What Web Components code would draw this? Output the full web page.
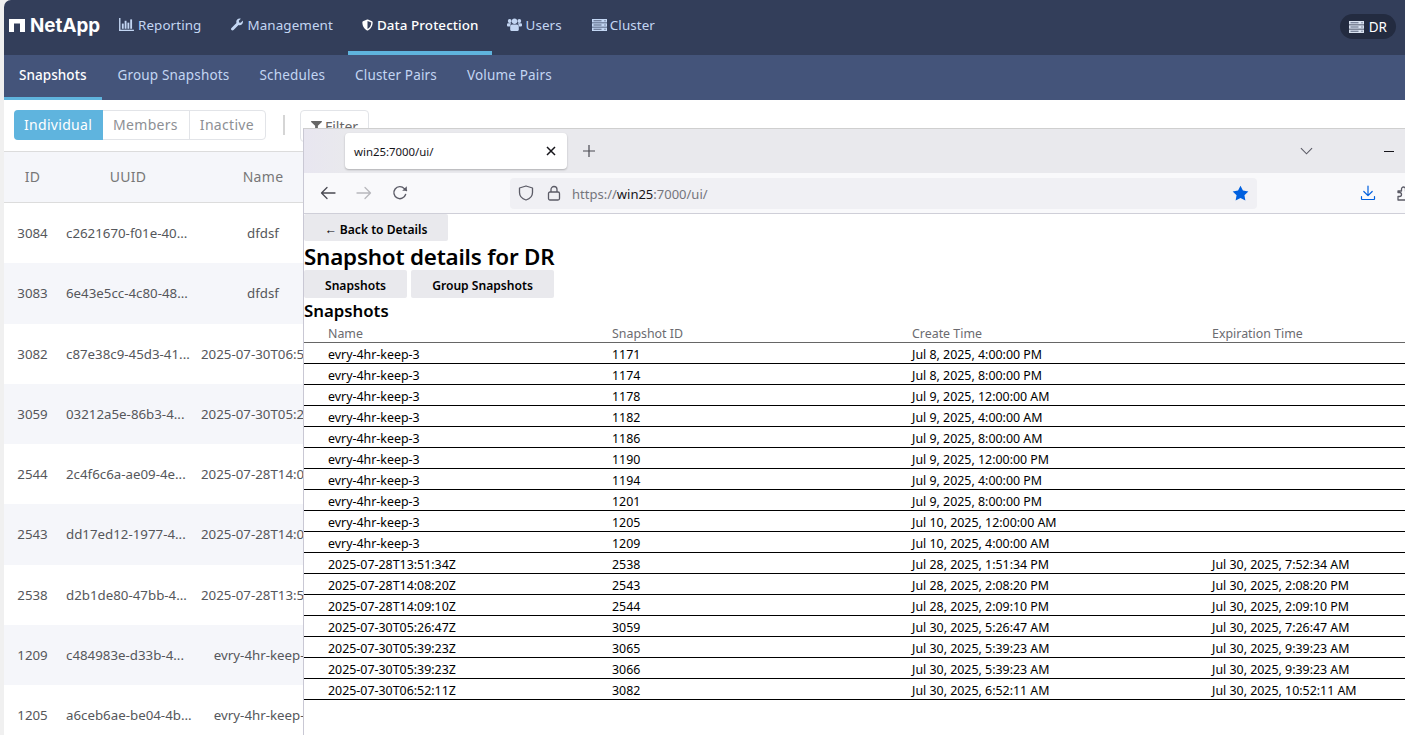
<!DOCTYPE html>
<html>
<head>
<meta charset="utf-8">
<title>Snapshots</title>
<style>
  html, body { margin: 0; height: 100%; overflow: hidden; }
  body { background: #f0f0f0; font-family: "Noto Sans", sans-serif; }
</style>
</head>
<body>
<app-shell></app-shell>

<script>
const ICONS = {
	chart: '<svg viewBox="0 0 16 14" width="15" height="13" fill="currentColor"><rect x="0" y="0" width="1.5" height="14"/><rect x="0" y="12.6" width="16" height="1.4"/><rect x="3" y="6" width="2" height="5.6"/><rect x="6" y="3" width="2" height="8.6"/><rect x="9" y="5" width="2" height="6.6"/><rect x="12" y="1.5" width="2" height="10.1"/></svg>',
	wrench: '<svg viewBox="0 0 512 512" width="13" height="13" fill="currentColor"><path d="M507.73 109.1c-2.24-9.03-13.54-12.09-20.12-5.51l-74.36 74.36-67.88-11.31-11.31-67.88 74.36-74.36c6.62-6.62 3.43-17.9-5.66-20.16-47.38-11.74-99.55.91-136.58 37.93-39.64 39.64-50.55 97.1-34.05 147.2L18.74 402.76c-24.99 24.99-24.99 65.51 0 90.5 24.99 24.99 65.51 24.99 90.5 0l213.21-213.21c50.12 16.71 107.47 5.68 147.37-34.22 37.07-37.07 49.7-89.32 37.91-136.73z"/></svg>',
	shield: '<svg viewBox="0 0 512 512" width="11" height="12" fill="currentColor"><path d="M466.5 83.7l-192-80a48.15 48.15 0 0 0-36.9 0l-192 80C27.7 91.1 16 108.6 16 128c0 198.5 114.5 335.7 221.5 380.3 11.8 4.9 25.1 4.9 36.9 0C360.1 472.6 496 349.3 496 128c0-19.4-11.7-36.9-29.5-44.3zM256.1 446.3l-.1-381 175.9 73.3c-3.3 151.4-82.1 261.1-175.8 307.7z"/></svg>',
	users: '<svg viewBox="0 0 15 13" width="15" height="13" fill="currentColor"><circle cx="2.7" cy="3" r="1.9"/><circle cx="12.3" cy="3" r="1.9"/><circle cx="7.5" cy="3.3" r="2.7"/><path d="M0 6.4c0-.7.6-1.1 1.2-1.1h2.2c.4 0 .7.1 1 .3-.8.7-1.4 1.6-1.5 2.8H.9C.4 8.4 0 8 0 7.5zM15 6.4c0-.7-.6-1.1-1.2-1.1h-2.2c-.4 0-.7.1-1 .3.8.7 1.4 1.6 1.5 2.8h2c.5 0 .9-.4.9-.9zM5 6.600h5c1 0 1.800.8 1.800 1.800v3.400c0 .7-.5 1.200-1.200 1.200H4.400c-.7 0-1.200-.5-1.200-1.200V8.400C3.200 7.400 4 6.600 5 6.600z"/></svg>',
	server: '<svg viewBox="0 0 15 12" width="15" height="12"><path fill="currentColor" d="M0 0h15v3.500H0zM0 4.250h15v3.500H0zM0 8.500h15V12H0z"/><path fill="#333e5a" opacity=".75" d="M1.500 1.300h8v1h-8zM1.500 5.500h8v1h-8zM1.500 9.800h8v1h-8z"/><path fill="#333e5a" d="M12.500 1.300h1v1h-1zM12.500 5.500h1v1h-1zM12.500 9.800h1v1h-1z"/></svg>',
	filter: '<svg viewBox="0 0 512 512" width="11" height="11" fill="currentColor"><path d="M487.976 0H24.028C2.71 0-8.047 25.866 7.058 40.971L192 225.941V432c0 7.831 3.821 15.17 10.237 19.662l80 55.98C298.02 518.69 320 507.493 320 487.98V225.941l184.947-184.97C520.021 25.896 509.338 0 487.976 0z"/></svg>',
	back: '<svg viewBox="0 0 16 16" width="16" height="16" fill="none" stroke="currentColor" stroke-width="1.300" stroke-linecap="round" stroke-linejoin="round"><path d="M15 8H1.500M7 2.500 1.500 8 7 13.500"/></svg>',
	forward: '<svg viewBox="0 0 16 16" width="16" height="16" fill="none" stroke="currentColor" stroke-width="1.300" stroke-linecap="round" stroke-linejoin="round"><path d="M1 8h13.500M9 2.500 14.500 8 9 13.500"/></svg>',
	reload: '<svg viewBox="0 0 16 16" width="16" height="16" fill="none" stroke="currentColor" stroke-width="1.400" stroke-linecap="round" stroke-linejoin="round"><path d="M13.600 9.500A6 6 0 1 1 12.300 3.600L14.500 5.500"/><path d="M14.800 1.200v4.600h-4.600" stroke="none" fill="currentColor"/></svg>',
	urlshield: '<svg viewBox="0 0 16 16" width="16" height="16" fill="none" stroke="currentColor" stroke-width="1.300" stroke-linejoin="round"><path d="M8 1 14.500 3v4.500c0 3.800-2.800 6.300-6.500 7.500-3.700-1.200-6.500-3.700-6.500-7.500V3z"/></svg>',
	lock: '<svg viewBox="0 0 16 16" width="16" height="16" fill="none" stroke="currentColor" stroke-width="1.300" stroke-linejoin="round"><rect x="2.500" y="7" width="11" height="8" rx="1.500"/><path d="M5 7V4.500a3 3 0 0 1 6 0V7"/></svg>',
	star: '<svg viewBox="0 0 16 16" width="17" height="17" fill="#0060df"><path d="M8 .6 10.300 5.200l5.100.8-3.700 3.600.9 5.100L8 12.300l-4.600 2.400.9-5.100L.6 6l5.100-.8z"/></svg>',
	download: '<svg viewBox="0 0 16 16" width="16" height="16" fill="none" stroke="#0060df" stroke-width="1.200" stroke-linecap="round" stroke-linejoin="round"><path d="M8 1v9.500M3.800 6.500 8 10.700l4.200-4.200M1.500 11.500V14c0 .3.200.5.500.5h12c.3 0 .5-.2.500-.5v-2.500"/></svg>',
	puzzle: '<svg viewBox="0 0 16 16" width="16" height="16" fill="none" stroke="#5b5b66" stroke-width="1.300" stroke-linejoin="round"><path d="M1 6h3.500V4a2 2 0 0 1 4 0v2H12v3.500h2a2 2 0 0 1 0 4h-2V15H1v-3.500h1.500a2 2 0 0 0 0-4H1z"/></svg>',
	close: '<svg viewBox="0 0 10 10" width="10" height="10" fill="none" stroke="currentColor" stroke-width="1.500"><path d="M1 1l8 8M9 1l-8 8"/></svg>',
	plus: '<svg viewBox="0 0 14 14" width="14" height="14" fill="none" stroke="currentColor" stroke-width="1.200"><path d="M7 1v12M1 7h12"/></svg>',
	chevron: '<svg viewBox="0 0 14 8" width="13" height="8" fill="none" stroke="currentColor" stroke-width="1.200"><path d="M1 1l6 6 6-6"/></svg>'
};

class NavItem extends HTMLElement {
	constructor() {
		super();
		this.attachShadow({ mode: 'open' });
	}

	connectedCallback() {
		const icon = ICONS[this.getAttribute('icon')] || '';
		this.shadowRoot.innerHTML = `
      <style>
        :host {
          display: flex;
          align-items: center;
          gap: 4px;
          height: 49px;
          padding: 0 14px 2px;
          margin-right: 1px;
          color: #c3d6f3;
          font-size: 13.4px;
          letter-spacing: 0.1px;
          border-bottom: 4px solid transparent;
        }
        :host([active]) {
          color: #fff;
          font-weight: 500;
          padding-right: 13px;
          border-bottom-color: #5fb4de;
        }
        :host([icon="server"]) { margin-left: 1px; gap: 3px; }
        .icon { display: flex; }
        :host([icon="wrench"]) .icon { width: 12px; margin-left: 1px; }
      </style>
      <span class="icon">${icon}</span><slot></slot>
    `;
	}
}

class TopNav extends HTMLElement {
	constructor() {
		super();
		this.attachShadow({ mode: 'open' });
		this.shadowRoot.innerHTML = `
      <style>
        :host {
          display: flex;
          height: 55px;
          background: #333e5a;
          border-top-left-radius: 7px;
          align-items: flex-start;
        }
        .logo {
          display: flex;
          align-items: center;
          gap: 5px;
          width: 101px;
          height: 51px;
          padding-left: 5px;
          box-sizing: border-box;
          color: #fff;
          font: 700 18.8px "Inter", sans-serif;
        }
        .pill {
          margin: 14px 9px 0 auto;
          display: flex;
          align-items: center;
          gap: 5px;
          height: 25px;
          padding: 0 9px;
          border-radius: 13px;
          background: #232b40;
          color: #fff;
          font-size: 13.5px;
        }
        .pill svg { display: block; }
        .pill span { display: flex; color: #d9e2f0; }
      </style>
      <div class="logo">
        <svg viewBox="0 0 16 13" width="16" height="13" fill="#fff"><path d="M0 0h16v13h-5V4.500H5V13H0z"/></svg>
        NetApp
      </div>
      <nav-item icon="chart">Reporting</nav-item>
      <nav-item icon="wrench">Management</nav-item>
      <nav-item icon="shield" active>Data Protection</nav-item>
      <nav-item icon="users">Users</nav-item>
      <nav-item icon="server">Cluster</nav-item>
      <div class="pill"><span>${ICONS.server}</span>DR</div>
    `;
	}
}

class SubNav extends HTMLElement {
	constructor() {
		super();
		this.attachShadow({ mode: 'open' });
		const tabs = ['Snapshots', 'Group Snapshots', 'Schedules', 'Cluster Pairs', 'Volume Pairs'];
		this.shadowRoot.innerHTML = `
      <style>
        :host {
          display: flex;
          height: 45px;
          background: #44547a;
        }
        .tab {
          display: flex;
          align-items: center;
          height: 40px;
          padding: 0 15px 2px;
          color: #c3d6f3;
          font-size: 13.5px;
          letter-spacing: 0.17px;
          border-bottom: 3px solid transparent;
        }
        .tab.active { color: #fff; font-weight: 500; letter-spacing: 0.06px; margin-right: 1px; border-bottom-color: #5fb4de; }
      </style>
      ${tabs.map((t, i) => `<div class="tab${i === 0 ? ' active' : ''}">${t}</div>`).join('')}
    `;
	}
}

class SegControl extends HTMLElement {
	constructor() {
		super();
		this.attachShadow({ mode: 'open' });
		this.shadowRoot.innerHTML = `
      <style>
        :host {
          display: inline-flex;
          height: 30px;
          box-sizing: border-box;
          border: 1px solid #e2e4e8;
          border-radius: 4px;
          font-size: 14px;
          letter-spacing: 0.3px;
          color: #8d8f94;
        }
        div { display: flex; align-items: center; padding: 0 11px 2px 10px; }
        div + div { border-left: 1px solid #e2e4e8; }
        div:last-child { padding-right: 11px; }
        .on {
          background: #5fb4de;
          color: #fff;
          margin: -1px 0 -1px -1px;
          padding: 0 11px 2px 10px;
          border-radius: 4px 0 0 4px;
        }
        .on + div { border-left: none; }
      </style>
      <div class="on">Individual</div>
      <div>Members</div>
      <div>Inactive</div>
    `;
	}
}

class SnapshotToolbar extends HTMLElement {
	constructor() {
		super();
		this.attachShadow({ mode: 'open' });
		this.shadowRoot.innerHTML = `
      <style>
        :host {
          display: flex;
          align-items: flex-start;
          height: 52px;
          padding: 10px 0 0 10px;
          box-sizing: border-box;
          border-bottom: 1px solid #dcdcdc;
        }
        .divider { width: 2px; height: 20px; margin: 5px 15px 0 17px; background: #d5d5d5; }
        .filter {
          display: flex;
          align-items: center;
          gap: 3px;
          height: 30px;
          padding: 0 10px;
          border: 1px solid #e2e4e8;
          border-radius: 4px;
          font-size: 14px;
          color: #666;
        }
      </style>
      <seg-control></seg-control>
      <div class="divider"></div>
      <div class="filter">${ICONS.filter}Filter</div>
    `;
	}
}

class SnapshotTable extends HTMLElement {
	constructor() {
		super();
		this.attachShadow({ mode: 'open' });
		const rows = [
			['3084', 'c2621670-f01e-40...', 'dfdsf'],
			['3083', '6e43e5cc-4c80-48...', 'dfdsf'],
			['3082', 'c87e38c9-45d3-41...', '2025-07-30T06:52:11Z'],
			['3059', '03212a5e-86b3-4...', '2025-07-30T05:26:47Z'],
			['2544', '2c4f6c6a-ae09-4e...', '2025-07-28T14:09:10Z'],
			['2543', 'dd17ed12-1977-4...', '2025-07-28T14:08:20Z'],
			['2538', 'd2b1de80-47bb-4...', '2025-07-28T13:51:34Z'],
			['1209', 'c484983e-d33b-4...', 'evry-4hr-keep-3'],
			['1205', 'a6ceb6ae-be04-4b...', 'evry-4hr-keep-3']
		];
		this.shadowRoot.innerHTML = `
      <style>
        :host { display: block; }
        .row {
          display: grid;
          grid-template-columns: 57px 134px 136px;
          align-items: center;
          height: 60.25px;
          font-size: 13.3px;
          color: #55575b;
          text-align: center;
        }
        .row > div { white-space: nowrap; padding: 0 6px; }
        .row > .uuid { text-align: left; padding: 0 0 0 5px; }
        .head {
          height: 51px;
          padding-bottom: 2px;
          font-size: 14px;
          color: #777;
          letter-spacing: 0.3px;
          border-bottom: 1px solid #dcdcdc;
          box-sizing: border-box;
        }
        .row:nth-child(even) { background: #f5f6fa; }
      </style>
      <div class="row head"><div>ID</div><div>UUID</div><div>Name</div></div>
      ${rows.map(r => `<div class="row"><div>${r[0]}</div><div class="uuid">${r[1]}</div><div>${r[2]}</div></div>`).join('')}
    `;
	}
}

class BrowserWindow extends HTMLElement {
	constructor() {
		super();
		this.attachShadow({ mode: 'open' });
		this.shadowRoot.innerHTML = `
      <style>
        :host {
          position: absolute;
          left: 303px;
          top: 128px;
          width: 1102px;
          height: 607px;
          box-sizing: border-box;
          display: flex;
          flex-direction: column;
          overflow: hidden;
          background: #fff;
          border-left: 1px solid #c9c8d4;
          border-top: 1px solid #cfcfcf;
          color: #15141a;
        }
        .tabs {
          display: flex;
          align-items: center;
          flex: none;
          height: 44px;
          padding-left: 41px;
          background: linear-gradient(90deg, #e8e6f0, #e9e9ed 40px);
          box-sizing: border-box;
        }
        .tab {
          display: flex;
          align-items: center;
          justify-content: space-between;
          width: 222px;
          height: 36px;
          padding: 0 11px 0 9px;
          box-sizing: border-box;
          background: #fff;
          border-radius: 4px;
          box-shadow: 0 1px 2px rgba(0,0,0,.25);
          font-size: 11.4px;
        }
        .new { display: flex; margin-left: 15px; color: #4a4a52; }
        .chev { display: flex; margin-left: auto; color: #5b5b66; }
        .min { width: 10px; height: 1px; background: #15141a; margin: 0 11px 0 71px; }
        .bar {
          display: flex;
          align-items: center;
          flex: none;
          height: 41px;
          padding-left: 16px;
          box-sizing: border-box;
          background: #f9f9fb;
          border-bottom: 1px solid #cfcfd8;
        }
        .bar > * { flex: none; }
        .bar span { display: flex; }
        .back { color: #4a4a52; }
        .fwd { color: #b8b8bd; margin-left: 20px; }
        .rel { color: #5b5b66; margin-left: 20px; }
        .url {
          display: flex;
          align-items: center;
          width: 747px;
          height: 31px;
          margin-left: 102px;
          padding: 0 8px;
          box-sizing: border-box;
          background: #f0f0f4;
          border-radius: 4px;
          font-size: 13px;
          color: #75757c;
        }
        .url div { padding-top: 1px; }
        .url b { font-weight: 400; color: #15141a; }
        .url .sh { color: #5b5b66; }
        .url .lk { color: #5b5b66; margin: 0 10px 0 12px; }
        .url .st { margin-left: auto; }
        .dl { margin-left: 103px; }
        .pz { margin-left: 21px; }
        .page { flex: 1; overflow: hidden; }
      </style>
      <div class="tabs">
        <div class="tab"><span>win25:7000/ui/</span>${ICONS.close}</div>
        <span class="new">${ICONS.plus}</span>
        <span class="chev">${ICONS.chevron}</span>
        <span class="min"></span>
      </div>
      <div class="bar">
        <span class="back">${ICONS.back}</span>
        <span class="fwd">${ICONS.forward}</span>
        <span class="rel">${ICONS.reload}</span>
        <div class="url">
          <span class="sh">${ICONS.urlshield}</span>
          <span class="lk">${ICONS.lock}</span>
          <div>https://<b>win25</b>:7000/ui/</div>
          <span class="st">${ICONS.star}</span>
        </div>
        <span class="dl">${ICONS.download}</span>
        <span class="pz">${ICONS.puzzle}</span>
      </div>
      <div class="page"><slot></slot></div>
    `;
	}
}

class SnapshotDetails extends HTMLElement {
	constructor() {
		super();
		this.attachShadow({ mode: 'open' });
		const rows = [
			['evry-4hr-keep-3', '1171', 'Jul 8, 2025, 4:00:00 PM', ''],
			['evry-4hr-keep-3', '1174', 'Jul 8, 2025, 8:00:00 PM', ''],
			['evry-4hr-keep-3', '1178', 'Jul 9, 2025, 12:00:00 AM', ''],
			['evry-4hr-keep-3', '1182', 'Jul 9, 2025, 4:00:00 AM', ''],
			['evry-4hr-keep-3', '1186', 'Jul 9, 2025, 8:00:00 AM', ''],
			['evry-4hr-keep-3', '1190', 'Jul 9, 2025, 12:00:00 PM', ''],
			['evry-4hr-keep-3', '1194', 'Jul 9, 2025, 4:00:00 PM', ''],
			['evry-4hr-keep-3', '1201', 'Jul 9, 2025, 8:00:00 PM', ''],
			['evry-4hr-keep-3', '1205', 'Jul 10, 2025, 12:00:00 AM', ''],
			['evry-4hr-keep-3', '1209', 'Jul 10, 2025, 4:00:00 AM', ''],
			['2025-07-28T13:51:34Z', '2538', 'Jul 28, 2025, 1:51:34 PM', 'Jul 30, 2025, 7:52:34 AM'],
			['2025-07-28T14:08:20Z', '2543', 'Jul 28, 2025, 2:08:20 PM', 'Jul 30, 2025, 2:08:20 PM'],
			['2025-07-28T14:09:10Z', '2544', 'Jul 28, 2025, 2:09:10 PM', 'Jul 30, 2025, 2:09:10 PM'],
			['2025-07-30T05:26:47Z', '3059', 'Jul 30, 2025, 5:26:47 AM', 'Jul 30, 2025, 7:26:47 AM'],
			['2025-07-30T05:39:23Z', '3065', 'Jul 30, 2025, 5:39:23 AM', 'Jul 30, 2025, 9:39:23 AM'],
			['2025-07-30T05:39:23Z', '3066', 'Jul 30, 2025, 5:39:23 AM', 'Jul 30, 2025, 9:39:23 AM'],
			['2025-07-30T06:52:11Z', '3082', 'Jul 30, 2025, 6:52:11 AM', 'Jul 30, 2025, 10:52:11 AM']
		];
		this.shadowRoot.innerHTML = `
      <style>
        :host { display: block; color: #000; font-family: "Noto Sans", sans-serif; }
        .btn {
          display: flex;
          align-items: center;
          justify-content: center;
          height: 26px;
          padding-top: 2px;
          background: #e9e9ed;
          border-radius: 2px;
          font-size: 12.1px;
          font-weight: 600;
        }
        .back { width: 144px; height: 23px; padding-top: 4px; }
        h2 { margin: 0; height: 29px; font-size: 22.4px; line-height: 32px; font-weight: 600; letter-spacing: -0.2px; }
        .btns { display: flex; gap: 4px; }
        .btns .a { width: 103px; }
        .btns .b { width: 143px; }
        h3 { margin: 0; height: 23px; padding-top: 1px; font-size: 16.8px; line-height: 24px; font-weight: 600; }
        .row {
          display: grid;
          grid-template-columns: 284px 300px 300px 1fr;
          height: 21px;
          padding: 2px 0 0 24px;
          box-sizing: border-box;
          border-bottom: 1px solid #000;
          font-size: 12.4px;
          line-height: 20px;
          white-space: nowrap;
        }
        .head { color: #6b6b70; border-bottom-color: #666; }
      </style>
      <div class="btn back">← Back to Details</div>
      <h2>Snapshot details for DR</h2>
      <div class="btns"><div class="btn a">Snapshots</div><div class="btn b">Group Snapshots</div></div>
      <h3>Snapshots</h3>
      <div class="row head"><div>Name</div><div>Snapshot ID</div><div>Create Time</div><div>Expiration Time</div></div>
      ${rows.map(r => `<div class="row">${r.map(c => `<div>${c}</div>`).join('')}</div>`).join('')}
    `;
	}
}

class AppShell extends HTMLElement {
	constructor() {
		super();
		this.attachShadow({ mode: 'open' });
		this.shadowRoot.innerHTML = `
      <style>
        :host {
          display: block;
          height: 735px;
          padding-left: 4px;
          box-sizing: border-box;
          overflow: hidden;
          font-family: "Noto Sans", sans-serif;
        }
        .main { height: 635px; background: #fff; overflow: hidden; }
      </style>
      <top-nav></top-nav>
      <sub-nav></sub-nav>
      <div class="main">
        <snapshot-toolbar></snapshot-toolbar>
        <snapshot-table></snapshot-table>
      </div>
      <browser-window><snapshot-details></snapshot-details></browser-window>
    `;
	}
}

customElements.define('nav-item', NavItem);
customElements.define('top-nav', TopNav);
customElements.define('sub-nav', SubNav);
customElements.define('seg-control', SegControl);
customElements.define('snapshot-toolbar', SnapshotToolbar);
customElements.define('snapshot-table', SnapshotTable);
customElements.define('browser-window', BrowserWindow);
customElements.define('snapshot-details', SnapshotDetails);
customElements.define('app-shell', AppShell);
</script>
</body>
</html>
